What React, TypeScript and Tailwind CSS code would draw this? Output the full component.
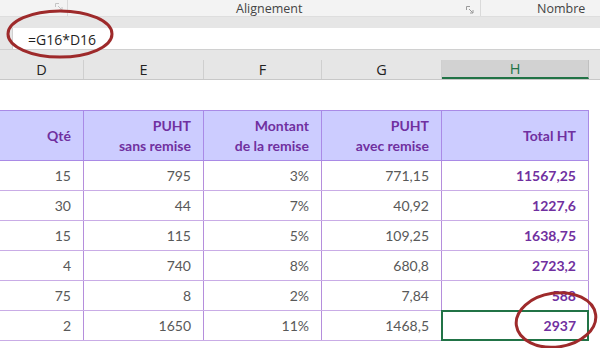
import React from "react";

const UI = { fontFamily: '"Open Sans", "Noto Sans", sans-serif' };
const CAL = { fontFamily: 'Lato, "Open Sans", sans-serif' };

function Launcher({ color = "#9a9a9a" }: { color?: string }) {
  return (
    <svg width="8" height="8" viewBox="0 0 8 8" fill="none" stroke={color} strokeWidth="1">
      <path d="M0.5 4V0.5H4" />
      <path d="M3 3L7 7M7 4V7H4" />
    </svg>
  );
}

const cols = [
  { w: "w-[84px]", letter: "D" },
  { w: "w-[120px]", letter: "E" },
  { w: "w-[118px]", letter: "F" },
  { w: "w-[120px]", letter: "G" },
  { w: "w-[147px]", letter: "H" },
];

const rows = [
  ["15", "795", "3%", "771,15", "11567,25"],
  ["30", "44", "7%", "40,92", "1227,6"],
  ["15", "115", "5%", "109,25", "1638,75"],
  ["4", "740", "8%", "680,8", "2723,2"],
  ["75", "8", "2%", "7,84", "588"],
  ["2", "1650", "11%", "1468,5", "2937"],
];

const headers = [
  ["Qté"],
  ["PUHT", "sans remise"],
  ["Montant", "de la remise"],
  ["PUHT", "avec remise"],
  ["Total HT"],
];

export default function App() {
  return (
    <div className="relative w-[600px] h-[348px] overflow-hidden bg-white">
      {/* ribbon group labels */}
      <div className="flex h-[17px] bg-[#f3f3f3] border-b border-[#dedede] text-[12.5px] text-[#444]" style={UI}>
        <div className="w-[68px] border-r border-[#dadada] flex items-start justify-end pr-[4px] pt-[3px]">
          <Launcher color="#c4c4c4" />
        </div>
        <div className="w-[413px] border-r border-[#dadada] flex items-center relative">
          <span className="pl-[168px] pt-[3px] leading-none">Alignement</span>
          <span className="absolute right-[6px] top-[6px]">
            <Launcher />
          </span>
        </div>
        <div className="flex-1 flex items-center pl-[56px] pt-[3px] leading-none">Nombre</div>
      </div>
      {/* gap band */}
      <div className="h-[11px] bg-[#e6e6e6]" />
      {/* formula bar */}
      <div className="flex h-[22px] border-b border-[#d0d0d0]">
        <div className="w-[13px] bg-[#e6e6e6] border-r border-[#d0d0d0]" />
        <div className="flex-1 bg-white flex items-center pl-[15px] pt-[1px] text-[14px] text-[#1f1f1f]" style={UI}>
          =G16*D16
        </div>
      </div>
      <div className="h-[10px] bg-[#e6e6e6]" />
      {/* column headers */}
      <div className="flex h-[20px] bg-[#e6e6e6] border-b border-[#c8c8c8] text-[14.5px]" style={UI}>
        {cols.map((c) =>
          c.letter === "H" ? (
            <div
              key={c.letter}
              className={`${c.w} bg-[#d2d2d2] border-r border-[#c0c0c0] border-b-2 border-b-[#217346] flex items-center justify-center pt-[2px] text-[#217346] leading-none`}
            >
              H
            </div>
          ) : (
            <div
              key={c.letter}
              className={`${c.w} border-r border-[#cfcfcf] flex items-center justify-center pt-[2px] text-[#222] leading-none`}
            >
              {c.letter}
            </div>
          )
        )}
        <div className="flex-1" />
      </div>
      {/* empty row */}
      <div className="h-[30px]" />
      {/* table */}
      <div style={CAL} className="text-[14px]">
        <div className="flex h-[51px] border-y border-[#a98ae6] bg-[#ccccff] w-[589px]">
          {headers.map((h, i) => (
            <div
              key={i}
              className={`${cols[i].w} border-r border-[#a98ae6] flex flex-col justify-center items-end pr-[12px] font-bold text-[#7030a0] leading-[20px]`}
            >
              {h.map((l) => (
                <span key={l}>{l}</span>
              ))}
            </div>
          ))}
        </div>
        {rows.map((r, ri) => (
          <div key={ri} className="flex h-[30px] border-b border-[#c9ace6] w-[589px]">
            {r.map((v, ci) => {
              const isH = ci === 4;
              const sel = isH && ri === rows.length - 1;
              return (
                <div
                  key={ci}
                  className={`${cols[ci].w} relative border-r border-[#b58edc] flex items-center justify-end pr-[12px] ${
                    isH ? "font-bold text-[#7030a0]" : "text-[#595959]"
                  }`}
                >
                  {v}
                  {sel && (
                    <div className="absolute left-[-1px] top-[-1px] right-[-1px] bottom-[-1px] border-2 border-[#217346]" />
                  )}
                </div>
              );
            })}
          </div>
        ))}
      </div>
      {/* annotations */}
      <svg className="absolute left-0 top-0 pointer-events-none" width="600" height="348">
        <ellipse cx="60" cy="34" rx="52" ry="23" fill="none" stroke="#9e2a2b" strokeWidth="3" />
        <ellipse
          cx="556"
          cy="320"
          rx="40"
          ry="27"
          fill="none"
          stroke="#9e2a2b"
          strokeWidth="3"
          transform="rotate(-8 556 320)"
        />
      </svg>
    </div>
  );
}
